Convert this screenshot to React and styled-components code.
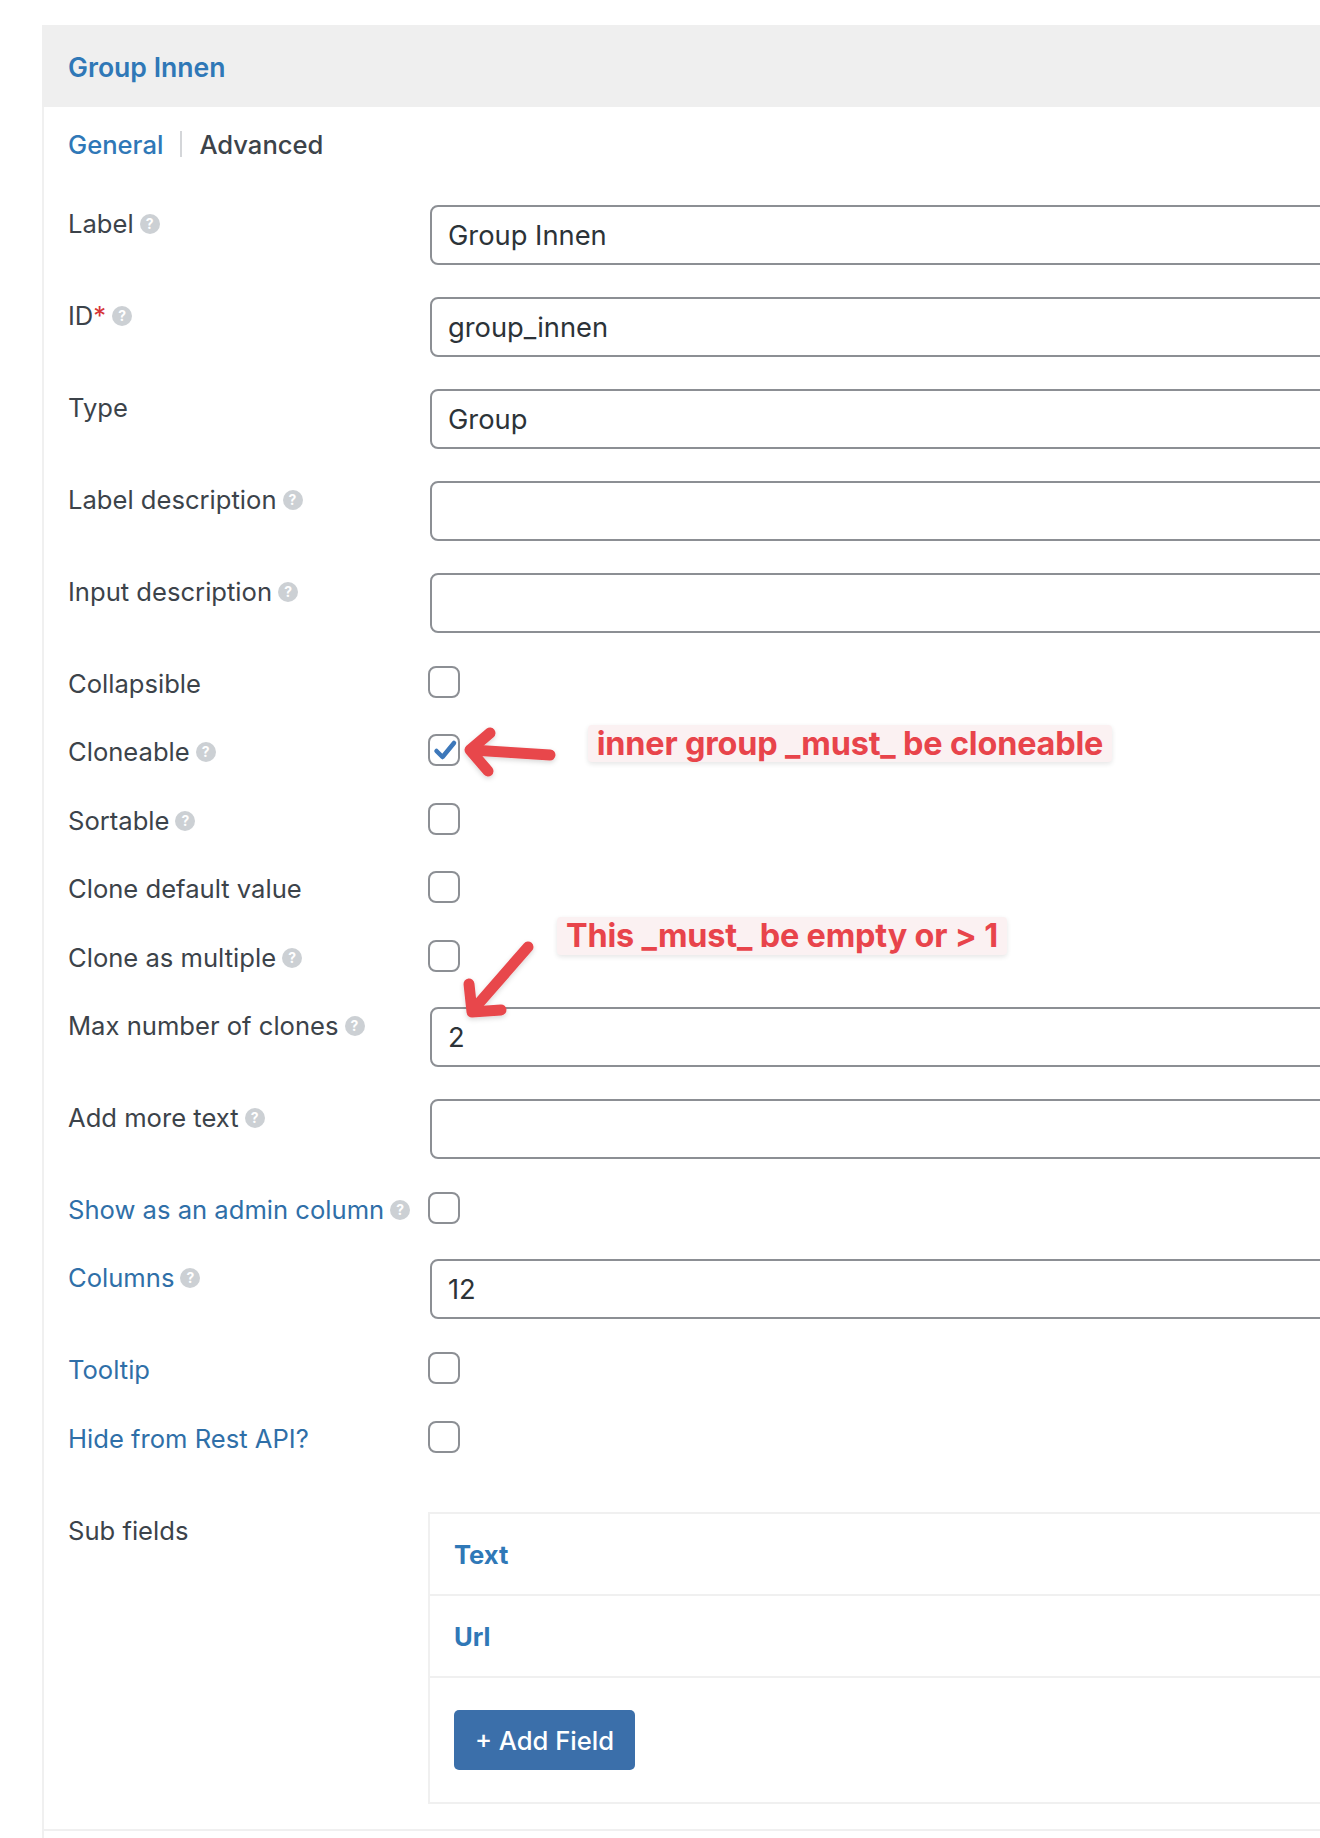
import React from "react";
import styled, { createGlobalStyle } from "styled-components";

const GlobalStyle = createGlobalStyle`
  html, body {
    margin: 0;
    background: #fff;
  }
  body {
    font-family: Inter, "Liberation Sans", sans-serif;
    color: #3c434a;
  }
`;

const fields = [
  { label: "Label", help: true, kind: "input", value: "Group Innen" },
  { label: "ID", required: true, help: true, kind: "input", value: "group_innen" },
  { label: "Type", kind: "input", value: "Group" },
  { label: "Label description", help: true, kind: "input" },
  { label: "Input description", help: true, kind: "input" },
  { label: "Collapsible", kind: "check" },
  { label: "Cloneable", help: true, kind: "check", checked: true },
  { label: "Sortable", help: true, kind: "check" },
  { label: "Clone default value", kind: "check" },
  { label: "Clone as multiple", help: true, kind: "check" },
  { label: "Max number of clones", help: true, kind: "input", value: "2" },
  { label: "Add more text", help: true, kind: "input" },
  { label: "Show as an admin column", help: true, kind: "check", link: true },
  { label: "Columns", help: true, kind: "input", value: "12", link: true },
  { label: "Tooltip", kind: "check", link: true },
  { label: "Hide from Rest API?", kind: "check", link: true },
];

function App() {
  return (
    <>
      <GlobalStyle />
      <Page>
        <Panel>
          <PanelHeader>Group Innen</PanelHeader>
          <PanelBody>
            <Tabs>
              <Tab $active>General</Tab>
              <TabDivider />
              <Tab>Advanced</Tab>
            </Tabs>
            {fields.map((field) => (
              <Row key={field.label} $kind={field.kind}>
                <Label $link={field.link}>
                  {field.label}
                  {field.required && <Required>*</Required>}
                  {field.help && <Help>?</Help>}
                </Label>
                {field.kind === "input" ? (
                  <TextField>{field.value}</TextField>
                ) : (
                  <CheckBox>
                    {field.checked && (
                      <svg width="28" height="28" viewBox="0 0 28 28">
                        <path
                          d="M6.5 15 L12.5 21 L24 7"
                          fill="none"
                          stroke="#3d78ba"
                          strokeWidth="4.5"
                          strokeLinecap="round"
                          strokeLinejoin="round"
                        />
                      </svg>
                    )}
                  </CheckBox>
                )}
              </Row>
            ))}
            <SubRow>
              <Label>Sub fields</Label>
              <SubBox>
                <SubItem>Text</SubItem>
                <SubItem>Url</SubItem>
                <SubFooter>
                  <AddButton>+ Add Field</AddButton>
                </SubFooter>
              </SubBox>
            </SubRow>
          </PanelBody>
          <PanelFoot />
        </Panel>

        <NoteOne>inner group _must_ be cloneable</NoteOne>
        <NoteTwo>This _must_ be empty or &gt; 1</NoteTwo>
        <Arrows width="1320" height="1838" viewBox="0 0 1320 1838">
          <defs>
            <filter id="soft" x="-30%" y="-30%" width="160%" height="160%">
              <feDropShadow dx="0" dy="2" stdDeviation="2.5" floodColor="#000" floodOpacity="0.16" />
            </filter>
          </defs>
          <g
            fill="none"
            stroke="#e8474c"
            strokeWidth="11"
            strokeLinecap="round"
            strokeLinejoin="round"
            filter="url(#soft)"
          >
            <path d="M550 755 L472 750" />
            <path d="M490 733 L470 750 L488 771" />
            <path d="M528 947 L473 1010" />
            <path d="M469 984 L472 1012 L501 1010" />
          </g>
        </Arrows>
      </Page>
    </>
  );
}

const Page = styled.div`
  position: relative;
  width: 1320px;
  height: 1838px;
  overflow: hidden;
  padding-top: 25px;
  box-sizing: border-box;
  background: #fff;
`;

const Panel = styled.div`
  margin-left: 42px;
  border-left: 2px solid #f0f0f0;
`;

const PanelHeader = styled.div`
  height: 82px;
  margin-left: -2px;
  padding-left: 26px;
  background: #efefef;
  color: #2f78b7;
  font-size: 26.6px;
  font-weight: 600;
  line-height: 85px;
`;

const PanelBody = styled.div`
  padding-left: 24px;
`;

const Tabs = styled.div`
  display: flex;
  align-items: center;
  height: 26px;
  padding-top: 24px;
  margin-bottom: 48px;
`;

const Tab = styled.span`
  font-size: 25.6px;
  font-weight: 500;
  color: ${(props) => (props.$active ? "#2f78b7" : "#3c434a")};
`;

const TabDivider = styled.span`
  width: 2px;
  height: 26px;
  margin: 0 17px;
  background: #d4d6d9;
`;

const Row = styled.div`
  display: flex;
  align-items: flex-start;
  height: ${(props) => (props.$kind === "input" ? "92px" : "68.4px")};
`;

const Label = styled.div`
  display: flex;
  align-items: center;
  flex: 0 0 360px;
  padding-top: 2px;
  font-size: 25.6px;
  line-height: 34px;
  white-space: nowrap;
  color: ${(props) => (props.$link ? "#2f6fa8" : "#3c434a")};
`;

const Required = styled.span`
  color: #d63638;
`;

const Help = styled.span`
  width: 20px;
  height: 20px;
  margin-left: 6px;
  border-radius: 50%;
  background: #ccd0d4;
  color: #fff;
  font-size: 14px;
  font-weight: 700;
  line-height: 20px;
  text-align: center;
`;

const TextField = styled.div`
  box-sizing: border-box;
  flex: 0 0 1000px;
  height: 60px;
  margin-left: 2px;
  padding-left: 16px;
  border: 2px solid #8c8f94;
  border-radius: 8px;
  background: #fff;
  color: #2c3338;
  font-size: 27.3px;
  line-height: 58px;
`;

const CheckBox = styled.div`
  box-sizing: border-box;
  width: 32px;
  height: 32px;
  margin-top: 1px;
  border: 2px solid #8c8f94;
  border-radius: 8px;
  background: #fff;
`;

const SubRow = styled.div`
  display: flex;
  align-items: flex-start;
  padding-top: 24px;
`;

const SubBox = styled.div`
  flex: 0 0 1000px;
  box-sizing: border-box;
  border: 2px solid #f0f0f0;
  border-right: 0;
`;

const SubItem = styled.div`
  height: 80px;
  padding-left: 24px;
  border-bottom: 2px solid #f0f0f0;
  color: #2f78b7;
  font-size: 25.6px;
  font-weight: 700;
  line-height: 82px;
`;

const SubFooter = styled.div`
  padding: 32px 24px 32px;
`;

const AddButton = styled.button`
  display: block;
  width: 181px;
  height: 60px;
  border: 0;
  border-radius: 5px;
  background: #3b6faa;
  color: #fff;
  font-family: inherit;
  font-size: 25.6px;
  font-weight: 500;
`;

const PanelFoot = styled.div`
  height: 30px;
  margin-top: 25px;
  border-top: 2px solid #f0f0f0;
`;

const Note = styled.div`
  position: absolute;
  box-sizing: border-box;
  border-radius: 4px;
  background: #fbf1f2;
  box-shadow: 0 2px 5px rgba(0, 0, 0, 0.1);
  color: #e8444b;
  font-size: 32.4px;
  font-weight: 700;
  letter-spacing: -0.17px;
  white-space: nowrap;
  text-align: center;
`;

const NoteOne = styled(Note)`
  left: 588px;
  top: 725px;
  width: 524px;
  height: 37px;
  line-height: 37px;
`;

const NoteTwo = styled(Note)`
  left: 557px;
  top: 917px;
  width: 450px;
  height: 38px;
  line-height: 38px;
`;

const Arrows = styled.svg`
  position: absolute;
  left: 0;
  top: 0;
  pointer-events: none;
`;

export default App;
